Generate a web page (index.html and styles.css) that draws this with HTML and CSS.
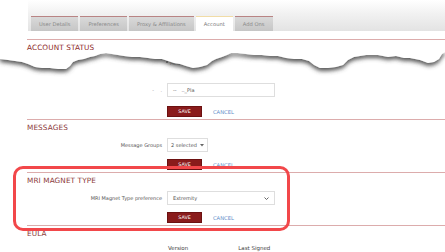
FILE: index.html
```html
<!DOCTYPE html>
<html lang="en">
<head>
<meta charset="UTF-8" />
<meta name="viewport" content="width=device-width, initial-scale=1" />
<title>Account Settings</title>
<link rel="stylesheet" href="styles.css">
</head>
<body>

<header class="topbar">
  <nav class="tabs">
    <span class="tab">User Details</span>
    <span class="tab">Preferences</span>
    <span class="tab">Proxy &amp; Affiliations</span>
    <span class="tab active">Account</span>
    <span class="tab">Add Ons</span>
  </nav>
</header>

<main class="content">

  <section class="panel account">
    <h2>ACCOUNT STATUS</h2>

    <!-- torn page: the middle of the screenshot was cut out -->
    <svg class="tear" width="445" height="33" viewBox="0 0 445 33">
      <defs>
        <filter id="tearShadow" x="-5%" y="-50%" width="110%" height="200%">
          <feDropShadow dx="0" dy="3" stdDeviation="2.2" flood-color="#444" flood-opacity="0.9" />
        </filter>
      </defs>
      <rect x="166" y="11" width="2" height="2" fill="#888" />
      <text x="170" y="15" font-size="5.5" fill="#999" font-family="DejaVu Sans">Active</text>
      <path filter="url(#tearShadow)" fill="#fff"
        d="M0,0 L445,0 L445,2 L442,4 L439,9 L434,12 L428,13 L420,10 L410,8 L404,8 L396,6 L388,7 L378,5 L366,5 L360,6 L354,7 L348,10 L343,15 L336,17 L328,18 L320,18 L314,15 L309,11 L302,9 L294,9 L286,8 L278,6 L270,6 L262,5 L254,5 L246,4 L238,3 L231,3 L227,5 L222,7 L216,9 L212,11 L207,15 L200,17 L193,18 L186,16 L180,14 L174,13 L168,11 L162,9 L155,9 L148,8 L140,7 L132,7 L124,6 L118,5 L112,4 L106,3 L100,4 L95,6 L90,7 L84,9 L78,10 L73,12 L70,16 L66,19 L58,19 L50,18 L42,18 L35,17 L28,14 L22,12 L15,11 L8,10 L0,9 Z" />
    </svg>

    <div class="row">
      <label class="label faint">-&nbsp;&nbsp;&nbsp;&nbsp;.</label>
      <div class="field wide">--&nbsp;&nbsp;&nbsp;.._Pla</div>
    </div>
    <div class="actions">
      <button class="save">SAVE</button>
      <a class="cancel">CANCEL</a>
    </div>
  </section>

  <section class="panel">
    <h2>MESSAGES</h2>
    <div class="row">
      <label class="label">Message Groups</label>
      <div class="field narrow">2 selected
        <svg class="caret" width="4" height="3" viewBox="0 0 4 3"><polygon points="0,0 4,0 2,2.5" fill="#666" /></svg>
      </div>
    </div>
    <div class="actions">
      <button class="save">SAVE</button>
      <a class="cancel">CANCEL</a>
    </div>
  </section>

  <section class="panel highlighted">
    <div class="highlight"></div>
    <h2>MRI MAGNET TYPE</h2>
    <div class="row">
      <label class="label">MRI Magnet Type preference</label>
      <div class="field wide">Extremity
        <svg class="chevron" width="5" height="3" viewBox="0 0 5 3"><polyline points="0.5,0.5 2.5,2.5 4.5,0.5" fill="none" stroke="#555" stroke-width="0.9" /></svg>
      </div>
    </div>
    <div class="actions">
      <button class="save">SAVE</button>
      <a class="cancel">CANCEL</a>
    </div>
  </section>

  <section class="panel">
    <h2>EULA</h2>
    <div class="eula-head">
      <span>Version</span>
      <span>Last Signed</span>
    </div>
  </section>

</main>

</body>
</html>
```

FILE: styles.css
```css
body {
  margin: 0;
  font-family: 'DejaVu Sans', Verdana, sans-serif;
  background: #fff;
  color: #555;
  overflow: hidden;
}
.topbar {
  padding-left: 28px;
  height: 31px;
}
.tabs {
  display: flex;
  gap: 2px;
  align-items: flex-end;
  height: 31px;
  box-sizing: border-box;
  padding: 16px 0 0 3px;
  background: linear-gradient(to bottom, #ffffff 0%, #f1f1f1 45%, #e3e3e3 100%);
}
.tab {
  height: 15px;
  box-sizing: border-box;
  padding: 0 8px;
  display: flex;
  align-items: center;
  font-size: 5.2px;
  color: #8a8a8a;
  background: linear-gradient(to bottom, #d9d9d9, #c6c6c6);
  border-top: 1px solid #b98484;
}
.tab.active {
  background: #fff;
  border-top: 1px solid #f1dca6;
  color: #777;
}
.content {
  padding-left: 27px;
  margin-top: 8px;
}
.panel {
  border-top: 1px solid #dcacac;
  padding: 3px 0 2px;
}
h2 {
  margin: 0;
  font-size: 7.3px;
  line-height: 10px;
  font-weight: normal;
  color: #8c3a3a;
  letter-spacing: 0.1px;
}
.account h2 {
  color: #8e2a2a;
}
.tear {
  display: block;
  margin: -3px 0 0 -27px;
}
.row {
  display: grid;
  grid-template-columns: 135px max-content;
  column-gap: 5px;
  align-items: center;
  margin-top: 5px;
}
.account .row {
  margin-top: 0;
}
.label {
  font-size: 5px;
  color: #555;
  text-align: right;
}
.label.faint {
  color: #999;
}
.field {
  height: 14px;
  box-sizing: border-box;
  border: 1px solid #dedede;
  padding: 0 5px;
  display: flex;
  align-items: center;
  justify-content: space-between;
  font-size: 5px;
  color: #555;
  background: #fff;
}
.field.wide {
  width: 108px;
}
.field.narrow {
  width: 41px;
  padding: 0 3px;
}
.actions {
  display: flex;
  align-items: center;
  margin-top: 7px;
  padding-left: 140px;
}
.account .actions {
  margin-top: 9px;
}
.save {
  width: 35px;
  height: 11px;
  padding: 0;
  border: 1px solid #6c1111;
  background: #8a1b1b;
  color: #fff;
  font-family: inherit;
  font-size: 4.8px;
}
.cancel {
  margin-left: 11px;
  font-size: 5.2px;
  color: #5d8cc9;
}
.highlighted {
  position: relative;
}
.highlight {
  position: absolute;
  left: -14px;
  right: 155px;
  top: -7px;
  bottom: -6px;
  border: 3px solid #f2474a;
  border-radius: 10px;
  pointer-events: none;
}
.eula-head {
  display: flex;
  gap: 50px;
  padding-left: 141px;
  margin-top: 6px;
  font-size: 5.5px;
  color: #444;
}
```
